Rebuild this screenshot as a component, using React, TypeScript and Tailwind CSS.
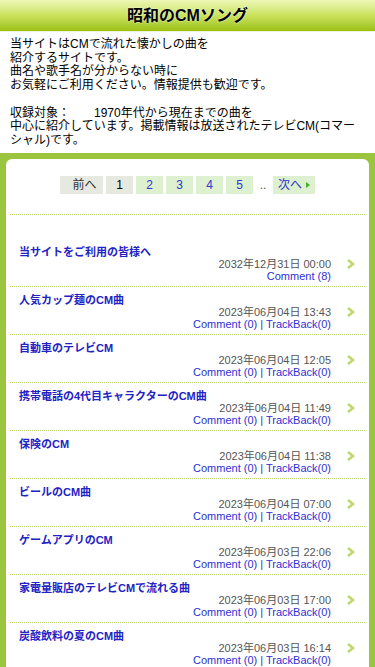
import React from 'react';

const posts = [
  { title: '当サイトをご利用の皆様へ', date: '2032年12月31日 00:00', comment: 8, tb: false },
  { title: '人気カップ麺のCM曲', date: '2023年06月04日 13:43', comment: 0, tb: true },
  { title: '自動車のテレビCM', date: '2023年06月04日 12:05', comment: 0, tb: true },
  { title: '携帯電話の4代目キャラクターのCM曲', date: '2023年06月04日 11:49', comment: 0, tb: true },
  { title: '保険のCM', date: '2023年06月04日 11:38', comment: 0, tb: true },
  { title: 'ビールのCM曲', date: '2023年06月04日 07:00', comment: 0, tb: true },
  { title: 'ゲームアプリのCM', date: '2023年06月03日 22:06', comment: 0, tb: true },
  { title: '家電量販店のテレビCMで流れる曲', date: '2023年06月03日 17:00', comment: 0, tb: true },
  { title: '炭酸飲料の夏のCM曲', date: '2023年06月03日 16:14', comment: 0, tb: true },
];

function Chevron() {
  return (
    <svg width="9" height="10" viewBox="0 0 9 10">
      <polyline points="2,1 7,5 2,9" fill="none" stroke="#bdd86e" strokeWidth="2.6" strokeLinejoin="miter" />
    </svg>
  );
}

export default function App() {
  return (
    <div className="min-h-[667px] bg-white font-['Liberation_Sans','Noto_Sans_CJK_JP',sans-serif] text-[12px] text-black">
      {/* header */}
      <header className="h-[32px] flex items-center justify-center bg-linear-to-b from-[#eef7b6] via-[#c9e25a] to-[#9cc10c] border-b border-[#eef4dc]">
        <h1 className="text-[16px] font-bold text-black [text-shadow:0_0_2px_#fff]">昭和のCMソング</h1>
      </header>

      {/* intro */}
      <div className="px-[10px] pt-[6px] pb-[5px] leading-[13.7px]">
        当サイトはCMで流れた懐かしの曲を<br />
        紹介するサイトです。<br />
        曲名や歌手名が分からない時に<br />
        お気軽にご利用ください。情報提供も歓迎です。<br />
        <br />
        収録対象：　　1970年代から現在までの曲を<br />
        中心に紹介しています。掲載情報は放送されたテレビCM(コマーシャル)です。
      </div>

      {/* main panel */}
      <div className="bg-[#9bc53e] px-[6px] pt-[6px]">
        <div className="bg-white rounded-t-[6px] px-[4px] min-h-[520px]">
          {/* pagination */}
          <div className="flex justify-center items-center gap-[3px] pt-[17px] pb-[20px] text-[12px]">
            <span className="h-[18px] w-[43px] flex items-center justify-center pl-[6px] bg-[#e6e9e0] text-[#333]">前へ</span>
            <span className="h-[18px] w-[27px] flex items-center justify-center bg-[#e6e9e0] text-black">1</span>
            {[2, 3, 4, 5].map(n => (
              <span key={n} className="h-[18px] w-[27px] flex items-center justify-center bg-[#ddf1d1] text-[#3434cc]">{n}</span>
            ))}
            <span className="w-[14px] text-center text-[#555]">..</span>
            <span className="h-[18px] w-[42px] flex items-center justify-center gap-[4px] bg-[#ddf1d1] text-[#3434cc]">
              次へ
              <svg width="4" height="6" viewBox="0 0 4 6"><polygon points="0,0 4,3 0,6" fill="#4caf2a" /></svg>
            </span>
          </div>

          {/* post list */}
          <ul className="text-[11px]">
            {posts.map((p, i) => (
              <li
                key={i}
                className={`flex items-center border-t border-dotted border-[#b8d66a] pb-[4px] ${i === 0 ? 'pt-[31px]' : 'pt-[7px]'}`}
              >
                <div className="flex-1 leading-[12px]">
                  <div className="h-[12px] pl-[9px] font-bold text-[#2323c4] whitespace-nowrap">{p.title}</div>
                  <div className="h-[12px] text-right text-[#555]">{p.date}</div>
                  <div className="h-[12px] text-right text-[#3030d0]">
                    Comment ({p.comment}){p.tb && ' | TrackBack(0)'}
                  </div>
                </div>
                <div className="w-[34px] flex justify-end pr-[10px]">
                  <Chevron />
                </div>
              </li>
            ))}
          </ul>
        </div>
      </div>
    </div>
  );
}
